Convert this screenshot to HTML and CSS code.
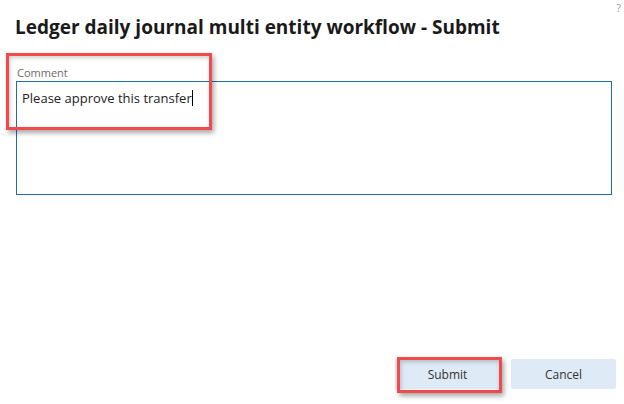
FILE: index.html
```html
<!DOCTYPE html>
<html>
<head>
<meta charset="utf-8">
<link rel="stylesheet" href="styles.css">
</head>
<body>
<div class="dialog">
  <span class="help">?</span>
  <h1 class="title">Ledger daily journal multi entity workflow - Submit</h1>
  <div class="field">
    <label class="label">Comment</label>
    <div class="textarea"><span class="value">Please approve this transfer</span><span class="caret"></span></div>
  </div>
  <div class="spacer"></div>
  <div class="actions">
    <button class="btn">Submit</button>
    <button class="btn">Cancel</button>
  </div>
  <div class="hl hl-comment"></div>
  <div class="hl hl-submit"></div>
</div>
</body>
</html>
```
FILE: styles.css
```css
html, body {
  margin: 0;
  padding: 0;
  background: #ffffff;
}
.dialog {
  position: relative;
  width: 624px;
  height: 404px;
  box-sizing: border-box;
  display: flex;
  flex-direction: column;
  font-family: "Open Sans", "Liberation Sans", sans-serif;
  color: #222;
  overflow: hidden;
}
.help {
  position: absolute;
  right: 3px;
  top: 0;
  font-size: 11px;
  line-height: 16px;
  color: #9a9a9a;
}
.title {
  margin: 14px 0 0 15px;
  font-size: 19px;
  line-height: 26px;
  font-weight: 700;
  color: #1a1a1a;
}
.field {
  margin: 26px 12px 0 16px;
  display: flex;
  flex-direction: column;
}
.label {
  font-size: 11px;
  line-height: 14px;
  color: #6b6b6b;
  padding-left: 1px;
  margin-bottom: 1px;
}
.textarea {
  height: 106px;
  border: 1px solid #1f6cb4;
  padding: 6px 0 0 5px;
  font-size: 13px;
  line-height: 20px;
  color: #222;
  display: flex;
  align-items: flex-start;
}
.caret {
  display: inline-block;
  width: 1px;
  height: 16px;
  background: #000;
  margin-top: 2px;
}
.spacer {
  flex: 1;
}
.actions {
  display: flex;
  justify-content: flex-end;
  gap: 11px;
  padding: 0 8px 15px 0;
}
.btn {
  width: 105px;
  height: 30px;
  border: none;
  border-radius: 2px;
  background: #deeaf6;
  font-family: "Open Sans", "Liberation Sans", sans-serif;
  font-size: 12px;
  color: #333;
  padding: 0;
}
.hl {
  position: absolute;
  border: 3px solid #f04a4a;
  box-shadow: 2px 3px 5px rgba(0, 0, 0, 0.35), inset 1px 2px 4px rgba(0, 0, 0, 0.2);
}
.hl-comment {
  left: 6px;
  top: 53px;
  width: 200px;
  height: 71px;
}
.hl-submit {
  left: 397px;
  top: 357px;
  width: 99px;
  height: 30px;
}
```
